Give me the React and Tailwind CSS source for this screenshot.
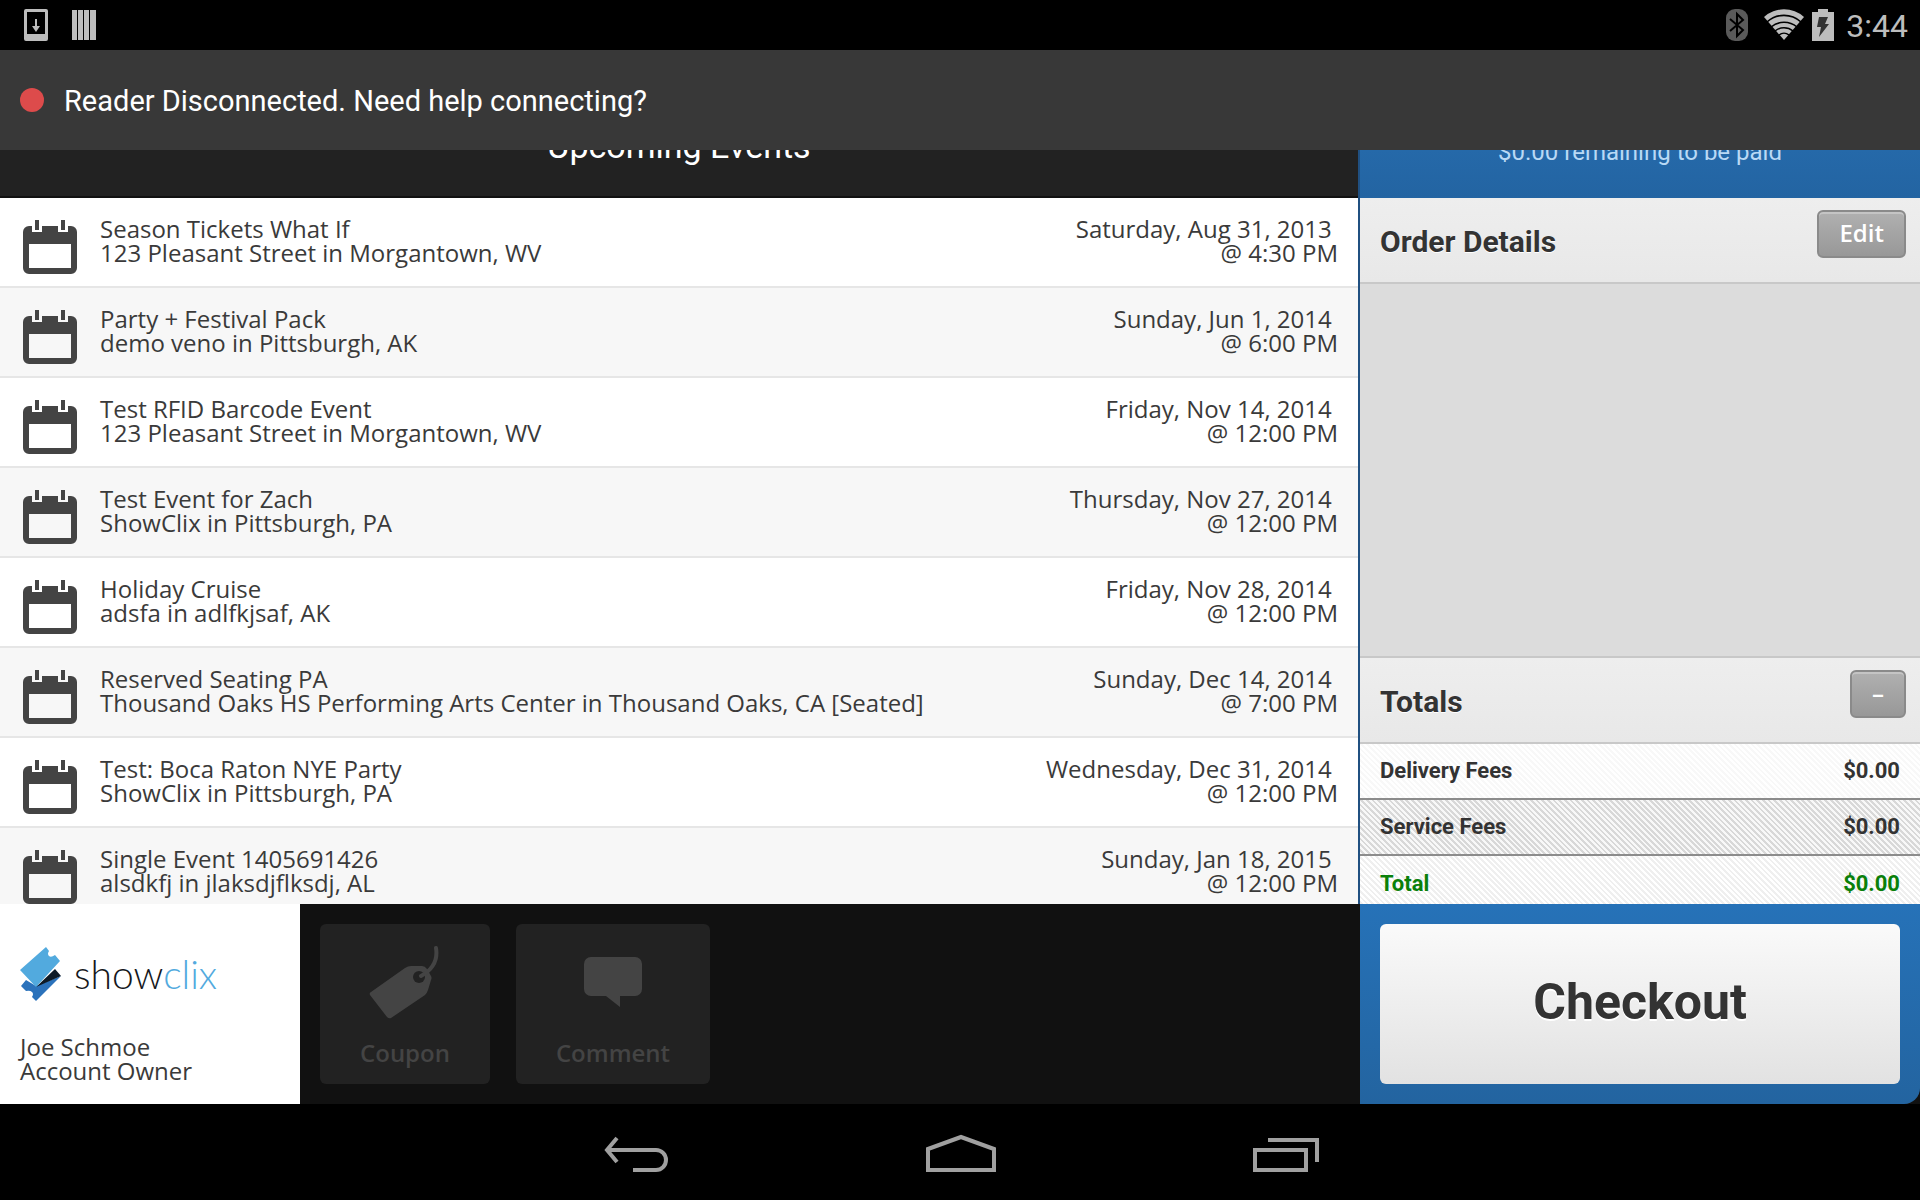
import { useState } from 'react';

const events = [
  { name: 'Season Tickets What If', venue: '123 Pleasant Street in Morgantown, WV', date: 'Saturday, Aug 31, 2013', time: '4:30 PM' },
  { name: 'Party + Festival Pack', venue: 'demo veno in Pittsburgh, AK', date: 'Sunday, Jun 1, 2014', time: '6:00 PM' },
  { name: 'Test RFID Barcode Event', venue: '123 Pleasant Street in Morgantown, WV', date: 'Friday, Nov 14, 2014', time: '12:00 PM' },
  { name: 'Test Event for Zach', venue: 'ShowClix in Pittsburgh, PA', date: 'Thursday, Nov 27, 2014', time: '12:00 PM' },
  { name: 'Holiday Cruise', venue: 'adsfa in adlfkjsaf, AK', date: 'Friday, Nov 28, 2014', time: '12:00 PM' },
  { name: 'Reserved Seating PA', venue: 'Thousand Oaks HS Performing Arts Center in Thousand Oaks, CA [Seated]', date: 'Sunday, Dec 14, 2014', time: '7:00 PM' },
  { name: 'Test: Boca Raton NYE Party', venue: 'ShowClix in Pittsburgh, PA', date: 'Wednesday, Dec 31, 2014', time: '12:00 PM' },
  { name: 'Single Event 1405691426', venue: 'alsdkfj in jlaksdjflksdj, AL', date: 'Sunday, Jan 18, 2015', time: '12:00 PM' },
];

const fees = [
  { label: 'Delivery Fees', amount: '$0.00', className: 'text-[#333] border-b-2 border-[#8c8c8c] bg-[repeating-linear-gradient(45deg,#ffffff_0px,#ffffff_2px,#f8f8f8_2px,#f8f8f8_4px)]' },
  { label: 'Service Fees', amount: '$0.00', className: 'text-[#333] border-b-2 border-[#8c8c8c] bg-[repeating-linear-gradient(45deg,#f8f8f8_0px,#f8f8f8_2px,#d8d8d8_2px,#d8d8d8_4px)]' },
  { label: 'Total', amount: '$0.00', className: 'text-[#0a800a] bg-[repeating-linear-gradient(45deg,#ffffff_0px,#ffffff_2px,#efefef_2px,#efefef_4px)]' },
];

function CalendarIcon() {
  return (
    <svg viewBox="0 0 54 54" className="h-[54px] w-[54px] shrink-0" fill="#444" aria-hidden="true">
      <path
        fillRule="evenodd"
        d="M6 6h3v6h10V6h16v6h10V6h3a6 6 0 0 1 6 6v36a6 6 0 0 1-6 6H6a6 6 0 0 1-6-6V12a6 6 0 0 1 6-6zm0 18v24h42V24z"
      />
      <path d="M12 0h4v10h-4zM38 0h4v10h-4z" />
    </svg>
  );
}

function StatusBar() {
  return (
    <div className="flex h-[50px] shrink-0 items-center justify-between bg-black pl-6 pr-3">
      <div className="flex items-center gap-6">
        <svg width="24" height="34" viewBox="0 0 24 34" aria-hidden="true">
          <path fill="#bdbdbd" fillRule="evenodd" d="M2 1h20a2 2 0 0 1 2 2v28a2 2 0 0 1-2 2H2a2 2 0 0 1-2-2V3a2 2 0 0 1 2-2zm1 3v22h18V4z" />
          <path fill="#bdbdbd" d="M11 11h2v7h3l-4 6-4-6h3z" />
        </svg>
        <svg width="24" height="32" viewBox="0 0 24 32" fill="#bdbdbd" aria-hidden="true">
          <path d="M0 1h5v30H0zM6 1h5v30H6zM12 1h5v30h-5zM18 1h6v30h-6z" />
        </svg>
      </div>
      <div className="flex items-center">
        <svg width="22" height="34" viewBox="0 0 22 34" className="mr-4" aria-hidden="true">
          <rect y="1" width="22" height="32" rx="9" fill="#5a5a5a" />
          <path d="M4 11l13 11-6 6V6l6 6L4 23" fill="none" stroke="#000" strokeWidth="2" />
        </svg>
        <svg width="40" height="32" viewBox="0 0 40 32" className="mr-2" aria-hidden="true">
          <path fill="#bdbdbd" d="M20 31L0 8a30 30 0 0 1 40 0z" />
          <g fill="none" stroke="#000" strokeWidth="1.6">
            <path d="M3 13a25 25 0 0 1 34 0M7 18a20 20 0 0 1 26 0M11 22a14 14 0 0 1 18 0M15 26a8 8 0 0 1 10 0" />
          </g>
        </svg>
        <svg width="22" height="32" viewBox="0 0 22 32" className="mr-3" aria-hidden="true">
          <path fill="#bdbdbd" d="M6 0h10v3h6v29H0V3h6z" />
          <path fill="#333" d="M7 8h9l-3 7h4L7 28l2-10H5z" />
        </svg>
        <span className="pt-0.5 font-[Roboto] text-[32px] leading-10 text-[#bdbdbd]">3:44</span>
      </div>
    </div>
  );
}

function EventRow({ event, shaded }) {
  return (
    <li className={`flex h-[90px] shrink-0 items-start border-b-2 border-[#e6e6e6] pl-[23px] pr-5 pt-[19px] ${shaded ? 'bg-[#f7f7f7]' : 'bg-white'}`}>
      <div className="pt-[3px]">
        <CalendarIcon />
      </div>
      <div className="ml-[23px] flex-1 text-2xl leading-6">
        <p>{event.name}</p>
        <p>{event.venue}</p>
      </div>
      <div className="text-right text-2xl leading-6">
        <p>{event.date}&nbsp;</p>
        <p>@ {event.time}</p>
      </div>
    </li>
  );
}

function PanelHeader({ title, children }) {
  return (
    <div className="flex h-[86px] shrink-0 items-start justify-between border-b-2 border-[#c8c8c8] bg-linear-to-b from-[#eeeeee] to-[#e8e8e8] pl-5 pr-3.5 pt-3">
      <h2 className="pt-3 font-[Roboto] text-3xl font-bold leading-10 text-[#333] [text-shadow:0_1px_0_#fff]">{title}</h2>
      {children}
    </div>
  );
}

function SmallButton({ children, ...props }) {
  return (
    <button
      type="button"
      className="h-12 rounded-md border-2 border-[#8a8a8a] bg-linear-to-b from-[#b0b0b0] to-[#989898] px-5 pb-0.5 text-2xl font-semibold leading-8 text-white shadow-[inset_0_2px_0_#c4c4c4]"
      {...props}
    >
      {children}
    </button>
  );
}

function ShowclixLogo() {
  return (
    <div className="flex items-center gap-3">
      <svg width="42" height="56" viewBox="0 0 42 56" aria-hidden="true">
        <path fill="#2b72bb" d="M1 40L6 34l10 6 25-10-25 25-4-4q2-3 0-5t-6-1z" />
        <path fill="#0e1a26" d="M16 41L35 23l6 7z" />
        <path fill="#52aade" d="M26 1l3 4q-2 3 0 5t6-1l5 6-24 26L0 24z" />
      </svg>
      <span className="font-[Lato] text-[39px] font-light leading-10 text-[#15181c]">
        show<span className="text-[#52aade]">clix</span>
      </span>
    </div>
  );
}

function ActionButton({ label, className, children }) {
  return (
    <button type="button" className={`flex h-40 flex-col items-center rounded-md bg-[#222] pt-[22px] text-[#444] ${className}`}>
      {children}
      <span className="mt-[15px] text-2xl font-semibold leading-8">{label}</span>
    </button>
  );
}

function NavBar() {
  return (
    <nav className="flex h-24 shrink-0 items-center justify-center gap-[257px] bg-black pl-1 pt-1">
      <button type="button" aria-label="Back">
        <svg width="66" height="40" viewBox="0 0 66 40" fill="none" stroke="#a0a0a0" strokeWidth="4">
          <path d="M3 16h50a10 10 0 0 1 0 20H30M14 4L4 16l10 12" />
        </svg>
      </button>
      <button type="button" aria-label="Home">
        <svg width="70" height="40" viewBox="0 0 70 40" fill="none" stroke="#a0a0a0" strokeWidth="4">
          <path d="M2 15L35 3l33 12v21H2z" />
        </svg>
      </button>
      <button type="button" aria-label="Recent apps">
        <svg width="68" height="40" viewBox="0 0 68 40" fill="none" stroke="#a0a0a0" strokeWidth="4">
          <path d="M2 16h51v20H2zM15 6h49v22" />
        </svg>
      </button>
    </nav>
  );
}

export default function App() {
  const [showFees, setShowFees] = useState(true);

  return (
    <div className="flex h-screen flex-col overflow-hidden bg-black font-['Open_Sans',sans-serif] text-[#3a3a3a]">
      <StatusBar />

      {/* Reader status */}
      <div className="flex h-[100px] shrink-0 items-center gap-5 bg-[#383838] px-5">
        <span className="h-6 w-6 rounded-full bg-[#dd4b4b]" />
        <a href="#reader" className="pt-0.5 font-[Roboto] text-[29px] leading-10 text-white">
          Reader Disconnected. Need help connecting?
        </a>
      </div>

      <div className="flex min-h-0 flex-1">
        {/* Events and actions */}
        <main className="flex min-w-0 flex-1 flex-col">
          <div className="flex min-h-0 flex-1 flex-col border-r-2 border-[#205081]">
            <header className="flex h-12 shrink-0 items-end justify-center overflow-hidden border-b-2 border-[#111] bg-[#222]">
              <h1 className="h-[70px] font-[Roboto] text-[34px] leading-10 text-white">Upcoming Events</h1>
            </header>
            <ul className="flex min-h-0 flex-1 flex-col overflow-hidden">
              {events.map((event, index) => (
                <EventRow key={event.name} event={event} shaded={index % 2 === 1} />
              ))}
            </ul>
          </div>
          <footer className="flex h-[200px] shrink-0 bg-[#111]">
            <div className="flex w-[300px] flex-col bg-white px-5 pt-[42px]">
              <ShowclixLogo />
              <div className="mt-[33px] text-2xl leading-6">
                <p>Joe Schmoe</p>
                <p>Account Owner</p>
              </div>
            </div>
            <div className="flex gap-[26px] p-5">
              <ActionButton label="Coupon" className="w-[170px]">
                <svg width="72" height="76" viewBox="0 0 72 76" aria-hidden="true">
                  <path fill="#444" d="M2 46L36 22q3-2 6-2h11q3 0 5 3l4 7q1 2 0 4l-3 10q-1 3-3 5L22 72q-2 1-4-1L1 49q-1-2 1-3z" />
                  <circle cx="50" cy="31" r="6" fill="#222" />
                  <path d="M52 30q18-10 15-28" fill="none" stroke="#444" strokeWidth="4" strokeLinecap="round" />
                </svg>
              </ActionButton>
              <ActionButton label="Comment" className="w-[194px]">
                <svg width="58" height="76" viewBox="0 0 58 76" fill="#444" aria-hidden="true">
                  <path d="M7 11h44a7 7 0 0 1 7 7v25a7 7 0 0 1-7 7H36v11L22 50H7a7 7 0 0 1-7-7V18a7 7 0 0 1 7-7z" />
                </svg>
              </ActionButton>
            </div>
          </footer>
        </main>

        {/* Order summary */}
        <aside className="flex w-[560px] shrink-0 flex-col">
          <div className="flex h-12 shrink-0 items-end justify-center overflow-hidden bg-linear-to-b from-[#2569a9] to-[#2364a2]">
            <p className="h-[62px] font-[Roboto] text-2xl leading-8 text-[#b9d9f5]">$0.00 remaining to be paid</p>
          </div>
          <PanelHeader title="Order Details">
            <SmallButton>Edit</SmallButton>
          </PanelHeader>
          <div className="min-h-0 flex-1 border-b-2 border-[#c8c8c8] bg-[#dcdcdc]" />
          <PanelHeader title="Totals">
            <SmallButton aria-label="Toggle fees" onClick={() => setShowFees(!showFees)}>–</SmallButton>
          </PanelHeader>
          {showFees && (
            <dl className="flex h-40 shrink-0 flex-col overflow-hidden font-[Roboto] text-[22px] font-bold">
              {fees.map((fee) => (
                <div key={fee.label} className={`flex h-14 shrink-0 items-center justify-between px-5 pb-0.5 ${fee.className}`}>
                  <dt>{fee.label}</dt>
                  <dd>{fee.amount}</dd>
                </div>
              ))}
            </dl>
          )}
          <div className="h-[200px] shrink-0 bg-[#111]">
            <div className="h-full rounded-br-2xl bg-linear-to-b from-[#2672b8] to-[#2364a0] p-5">
              <button
                type="button"
                className="h-full w-full rounded-md bg-linear-to-b from-[#fafafa] to-[#e2e2e2] pb-1 font-[Roboto] text-[50px] font-bold text-[#333] [text-shadow:0_2px_0_#fff]"
              >
                Checkout
              </button>
            </div>
          </div>
        </aside>
      </div>

      <NavBar />
    </div>
  );
}
